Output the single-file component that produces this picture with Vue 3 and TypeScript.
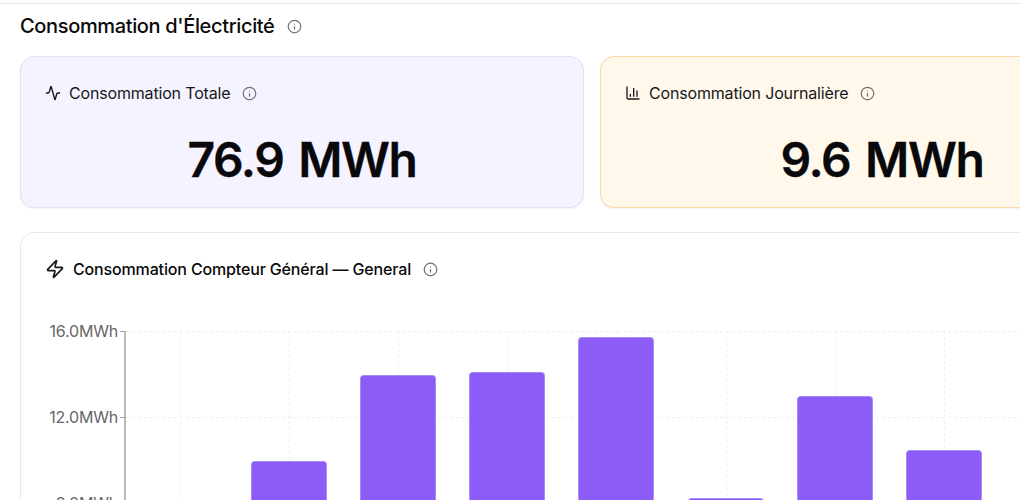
<script setup lang="ts">
const bars = [
  { x: 251, top: 461 },
  { x: 360, top: 375 },
  { x: 469, top: 372 },
  { x: 578, top: 337 },
  { x: 688, top: 498 },
  { x: 797, top: 396 },
  { x: 906, top: 450 },
];
const gridX = [180, 289, 398, 507, 616, 726, 835, 944];
const ticks = [
  { y: 21, label: "16.0MWh" },
  { y: 107, label: "12.0MWh" },
  { y: 193, label: "8.0MWh" },
];
// chart svg starts at page y=310, x=21
const originX = 21;
const originY = 310;

function barPath(b: { x: number; top: number }): string {
  const x = b.x - originX + 0.5;
  const y = b.top - originY + 0.5;
  const w = 75;
  return `M${x} 260V${y + 3}Q${x} ${y} ${x + 3} ${y}H${x + w - 3}Q${x + w} ${y} ${x + w} ${y + 3}V260Z`;
}
</script>

<template>
  <div class="page">
    <div class="topbar"></div>
    <div class="section-title">
      <h2>Consommation d'Électricité</h2>
      <svg class="info info-lg" viewBox="0 0 24 24"><circle cx="12" cy="12" r="10" /><path d="M12 16v-4M12 8h.01" /></svg>
    </div>

    <div class="stats">
      <div class="stat violet">
        <div class="stat-head">
          <svg class="icon" viewBox="0 0 24 24"><path d="M22 12h-2.48a2 2 0 0 0-1.93 1.46l-2.35 8.36a.25.25 0 0 1-.48 0L9.24 2.18a.25.25 0 0 0-.48 0l-2.35 8.36A2 2 0 0 1 4.49 12H2" /></svg>
          <span>Consommation Totale</span>
          <svg class="info" viewBox="0 0 24 24"><circle cx="12" cy="12" r="10" /><path d="M12 16v-4M12 8h.01" /></svg>
        </div>
        <div class="stat-value">76.9 MWh</div>
      </div>
      <div class="stat amber">
        <div class="stat-head">
          <svg class="icon" viewBox="0 0 24 24"><path d="M3 3v16a2 2 0 0 0 2 2h16M8 17v-3M13 17V5M18 17V9" /></svg>
          <span>Consommation Journalière</span>
          <svg class="info" viewBox="0 0 24 24"><circle cx="12" cy="12" r="10" /><path d="M12 16v-4M12 8h.01" /></svg>
        </div>
        <div class="stat-value">9.6 MWh</div>
      </div>
    </div>

    <div class="chart-card">
      <div class="chart-head">
        <svg class="icon icon-lg" viewBox="0 0 24 24"><path d="M4 14a1 1 0 0 1-.78-1.63l9.9-10.2a.5.5 0 0 1 .86.46l-1.92 6.02A1 1 0 0 0 13 10h7a1 1 0 0 1 .78 1.63l-9.9 10.2a.5.5 0 0 1-.86-.46l1.92-6.02A1 1 0 0 0 11 14z" /></svg>
        <span>Consommation Compteur Général — General</span>
        <svg class="info" viewBox="0 0 24 24"><circle cx="12" cy="12" r="10" /><path d="M12 16v-4M12 8h.01" /></svg>
      </div>
      <svg class="chart" width="1100" height="260">
        <line
          v-for="t in ticks"
          :key="'h' + t.y"
          class="grid"
          x1="105"
          x2="1100"
          :y1="t.y + 0.5"
          :y2="t.y + 0.5"
        />
        <line
          v-for="x in gridX"
          :key="'v' + x"
          class="grid"
          :x1="x - originX + 0.5"
          :x2="x - originX + 0.5"
          y1="21"
          y2="260"
        />
        <path v-for="b in bars" :key="b.x" class="bar" :d="barPath(b)" />
        <line class="axis" x1="104" x2="104" y1="21" y2="260" />
        <g v-for="t in ticks" :key="t.label">
          <line class="axis-tick" x1="99" x2="104" :y1="t.y + 0.5" :y2="t.y + 0.5" />
          <text class="tick-label" x="97" :y="t.y + 6" text-anchor="end">{{ t.label }}</text>
        </g>
      </svg>
    </div>
  </div>
</template>

<style>
html,
body {
  margin: 0;
  overflow: hidden;
  background: #fff;
}
</style>

<style scoped>
.page {
  width: 1164px;
  height: 500px;
  padding: 0 20px;
  box-sizing: content-box;
  font-family: Inter, "Liberation Sans", sans-serif;
  color: #0a0a0a;
  overflow: hidden;
}

.topbar {
  height: 3px;
  margin: 0 -20px;
  border-bottom: 1px solid #e7e7e9;
}

.section-title {
  display: flex;
  align-items: center;
  gap: 12px;
  height: 44px;
  margin-bottom: 8px;
}

.section-title h2 {
  margin: 0;
  font-size: 20px;
  line-height: 28px;
  font-weight: 500;
  letter-spacing: -0.35px;
}

.stats {
  display: grid;
  grid-template-columns: 564px 564px;
  gap: 16px;
}

.stat {
  box-sizing: border-box;
  height: 152px;
  padding: 24px;
  border-radius: 14px;
  border: 1px solid;
  box-shadow: 0 1px 2px rgba(0, 0, 0, 0.06);
}

.violet {
  background: #f5f3ff;
  border-color: #ebdcfc;
}

.amber {
  background: #fff8eb;
  border-color: #fdd9a5;
}

.stat-head {
  display: flex;
  align-items: center;
  height: 24px;
  font-size: 16px;
  font-weight: 400;
  letter-spacing: -0.17px;
  color: #18181b;
}

.stat-head span {
  margin-left: 8px;
}

.stat-head .info {
  margin-left: 12px;
}

.icon {
  width: 16px;
  height: 16px;
  flex-shrink: 0;
  fill: none;
  stroke: #18181b;
  stroke-width: 2;
  stroke-linecap: round;
  stroke-linejoin: round;
}

.icon-lg {
  width: 20px;
  height: 20px;
}

.info {
  width: 15px;
  height: 15px;
  flex-shrink: 0;
  fill: none;
  stroke: #71717a;
  stroke-width: 2;
  stroke-linecap: round;
  stroke-linejoin: round;
}

.info-lg {
  width: 15px;
  height: 15px;
}

.stat-value {
  margin-top: 31px;
  text-align: center;
  font-size: 48px;
  line-height: 48px;
  font-weight: 600;
  letter-spacing: -1.4px;
  word-spacing: 4px;
  color: #09090b;
  -webkit-text-stroke: 0.3px #09090b;
}

.chart-card {
  box-sizing: border-box;
  width: 1144px;
  height: 400px;
  margin-top: 24px;
  border: 1px solid #e9e9ec;
  border-radius: 14px;
  background: #fff;
}

.chart-head {
  display: flex;
  align-items: center;
  height: 24px;
  margin: 24px 24px 0;
  font-size: 16px;
  font-weight: 500;
  letter-spacing: -0.15px;
  color: #09090b;
}

.chart-head span {
  margin-left: 8px;
}

.chart-head .info {
  margin-left: 12px;
}

.chart {
  display: block;
  margin-top: 29px;
}

.grid {
  stroke: #eeeef0;
  stroke-dasharray: 3 3;
}

.bar {
  fill: #8b5cf6;
  stroke: #a78bfa;
  stroke-width: 1;
}

.axis {
  stroke: #a3a3a3;
  stroke-width: 1.5;
}

.axis-tick {
  stroke: #a3a3a3;
}

.tick-label {
  font-size: 16px;
  letter-spacing: -0.2px;
  fill: #666;
}
</style>
